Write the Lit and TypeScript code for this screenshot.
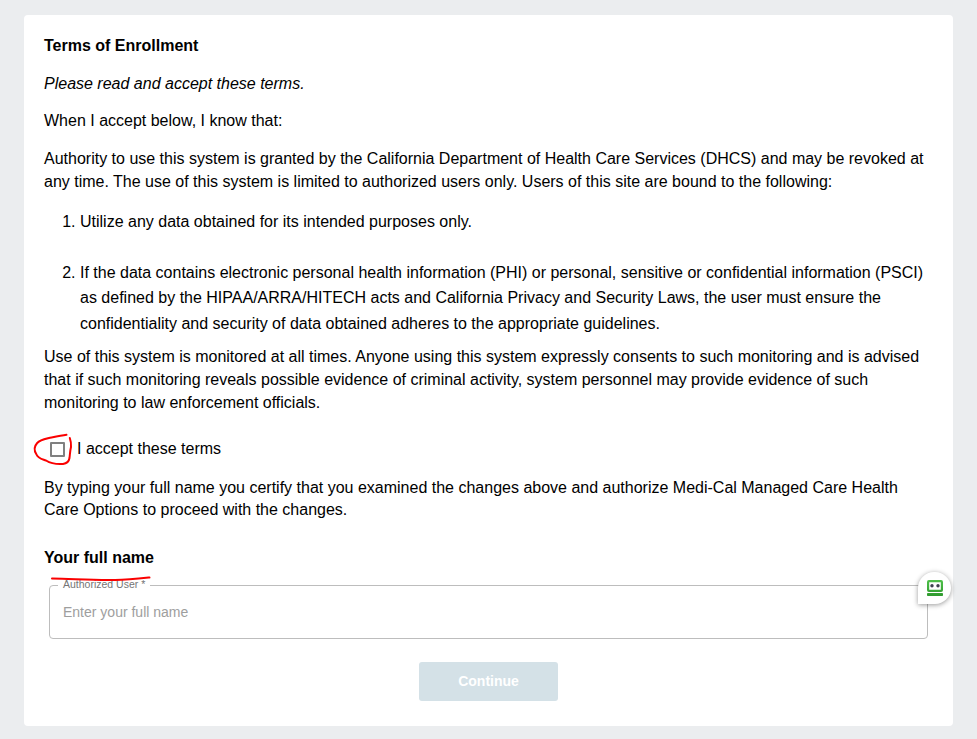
import { LitElement, html, css } from "lit";
import { customElement } from "lit/decorators.js";

@customElement("app-root")
export class AppRoot extends LitElement {
  static styles = css`
    :host {
      display: block;
      box-sizing: border-box;
      height: 739px;
      padding: 15px 24px 13px;
      background: #ebedef;
      overflow: hidden;
      color: #000;
      font: 16px/23px "Liberation Sans", Arial, sans-serif;
      white-space: nowrap;
    }
    .card {
      position: relative;
      box-sizing: border-box;
      height: 711px;
      padding: 19px 20px 0;
      border-radius: 4px;
      background: #fff;
    }
    p, h2, h3, ol { margin: 0; font-size: 16px; }
    h2 { margin-bottom: 15px; }
    .note { margin-bottom: 14px; font-style: italic; }
    .intro { margin-bottom: 15px; }
    .terms {
      margin: 16px 0 9px;
      padding-left: 36px;
      line-height: 25.5px;
    }
    .terms li + li { margin-top: 25px; }
    .accept {
      display: flex;
      align-items: center;
      gap: 12px;
      margin: 23px 0 17px;
      padding-left: 6px;
      height: 23px;
    }
    .box {
      box-sizing: border-box;
      width: 15px;
      height: 15px;
      margin-top: 2px;
      border: 2px solid #808080;
      border-radius: 1px;
    }
    .certify { line-height: 22px; margin-bottom: 25px; }
    .field {
      position: relative;
      box-sizing: border-box;
      height: 54px;
      margin: 16px 5px 23px;
      padding: 0 13px;
      display: flex;
      align-items: center;
      border: 1px solid #bdbdbd;
      border-radius: 4px;
      font-size: 14px;
      color: #9e9e9e;
    }
    .label {
      position: absolute;
      left: 8px;
      top: -8px;
      padding: 0 5px;
      background: #fff;
      color: #757575;
      font-size: 10.5px;
      line-height: 13px;
    }
    .continue {
      display: block;
      width: 139px;
      height: 39px;
      margin: 0 auto;
      padding: 0 0 2px;
      border: 0;
      border-radius: 3px;
      background: #d4e1e7;
      color: #fff;
      font: bold 14px "Liberation Sans", Arial, sans-serif;
    }
    .badge {
      position: absolute;
      left: 894px;
      top: 557px;
      width: 33px;
      height: 32px;
      border-radius: 16px 16px 16px 0;
      background: #fff;
      box-shadow: 0 1px 5px rgba(0, 0, 0, 0.4);
    }
    .badge svg { display: block; }
    .ink {
      position: absolute;
      left: 0;
      top: 411px;
      fill: none;
      stroke: #fa0000;
      stroke-width: 2;
      stroke-linecap: round;
      stroke-linejoin: round;
    }
  `;

  render() {
    return html`
      <main class="card">
        <h2>Terms of Enrollment</h2>
        <p class="note">Please read and accept these terms.</p>
        <p class="intro">When I accept below, I know that:</p>
        <p>
          Authority to use this system is granted by the California Department of Health Care Services (DHCS) and may be revoked at<br />
          any time. The use of this system is limited to authorized users only. Users of this site are bound to the following:
        </p>
        <ol class="terms">
          <li>Utilize any data obtained for its intended purposes only.</li>
          <li>
            If the data contains electronic personal health information (PHI) or personal, sensitive or confidential information (PSCI)<br />
            as defined by the HIPAA/ARRA/HITECH acts and California Privacy and Security Laws, the user must ensure the<br />
            confidentiality and security of data obtained adheres to the appropriate guidelines.
          </li>
        </ol>
        <p>
          Use of this system is monitored at all times. Anyone using this system expressly consents to such monitoring and is advised<br />
          that if such monitoring reveals possible evidence of criminal activity, system personnel may provide evidence of such<br />
          monitoring to law enforcement officials.
        </p>
        <div class="accept"><span class="box"></span><span>I accept these terms</span></div>
        <p class="certify">
          By typing your full name you certify that you examined the changes above and authorize Medi-Cal Managed Care Health<br />
          Care Options to proceed with the changes.
        </p>
        <h3>Your full name</h3>
        <div class="field">
          <span class="label">Authorized User *</span>
          <span>Enter your full name</span>
        </div>
        <button class="continue">Continue</button>
        <div class="badge">
          <svg width="33" height="32" viewBox="0 0 33 32">
            <defs>
              <linearGradient id="leaf" x1="0" y1="8" x2="0" y2="24" gradientUnits="userSpaceOnUse">
                <stop offset="0" stop-color="#4fc04a" />
                <stop offset="1" stop-color="#2f9a2e" />
              </linearGradient>
            </defs>
            <rect x="10.100" y="9.100" width="13.800" height="9.800" rx="0.800" fill="#fff" stroke="url(#leaf)" stroke-width="2.200" />
            <circle cx="14" cy="13.700" r="1.700" fill="#3d4150" />
            <circle cx="20" cy="13.700" r="1.700" fill="#3d4150" />
            <rect x="9" y="21" width="16" height="3" rx="0.800" fill="url(#leaf)" />
          </svg>
        </div>
        <svg class="ink" width="140" height="160" viewBox="24 426 140 160">
          <path d="M66.5 434.8C61 435.5 54 437 49 438C45 439 40 440 37.200 443C34 446.500 34.200 451 36.500 454.500C38 458.500 42 459 46 460.500C50 463 56 464.500 63 464C67 463.500 69 461 69.500 458C70 454 70 451 71 447C71.300 443 70.500 440 69.800 438" />
          <path d="M52 578.500C75 579 95 580.500 115 580C128 579.800 140 578.500 149.500 577.500" />
        </svg>
      </main>
    `;
  }
}
